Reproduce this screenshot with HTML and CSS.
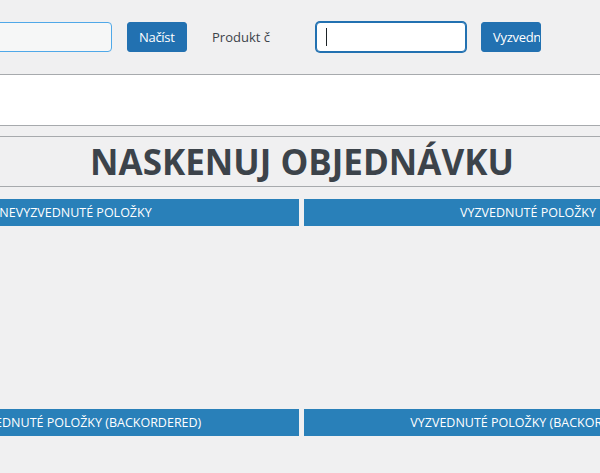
FILE: index.html
```html
<!DOCTYPE html>
<html lang="cs">

<head>
  <meta charset="UTF-8">
  <meta name="viewport" content="width=device-width, initial-scale=1.0">
  <link rel="stylesheet" href="styles.css">
  <title>Naskenuj objednávku</title>
</head>

<body>
  <div class="page">
    <div class="toolbar">
      <input type="text" class="field">
      <button type="button" class="button">Načíst</button>
      <span class="label">Produkt č</span>
      <span class="field-wrap">
        <input type="text" class="field field-focus" id="produkt">
      </span>
      <button type="button" class="button">Vyzvednout</button>
    </div>

    <div class="scan-box"></div>

    <h1 class="title">NASKENUJ OBJEDNÁVKU</h1>

    <div class="columns">
      <div class="bar">NEVYZVEDNUTÉ POLOŽKY</div>
      <div class="bar">VYZVEDNUTÉ POLOŽKY</div>
      <div class="list"></div>
      <div class="list"></div>
      <div class="bar">NEVYZVEDNUTÉ POLOŽKY (BACKORDERED)</div>
      <div class="bar">VYZVEDNUTÉ POLOŽKY (BACKORDERED)</div>
    </div>
  </div>
</body>

</html>
```

FILE: styles.css
```css
* {
  margin: 0;
  padding: 0;
  box-sizing: border-box;
}

body {
  font-family: 'Open Sans', 'Noto Sans', sans-serif;
  font-size: 13px;
  color: #3c434a;
  background: #f0f0f1;
  overflow: hidden;
}

.page {
  width: 900px;
  margin-left: -148px;
}

.toolbar {
  display: flex;
  align-items: center;
  height: 74px;
  padding: 0 0 0 110px;
}

.field {
  width: 150px;
  height: 30px;
  border: 1px solid #4fa8e8;
  border-radius: 4px;
  background: #f6f7f7;
  outline: 0;
  font-family: inherit;
  font-size: 14px;
  padding: 0 8px;
}

.field-wrap {
  position: relative;
  display: flex;
}

.field-wrap::after {
  content: "";
  position: absolute;
  left: 10px;
  top: 6px;
  width: 1px;
  height: 18px;
  background: #1d2327;
}

.field-focus {
  background: #fff;
  border-color: #2271b1;
  box-shadow: 0 0 0 1px #2271b1;
}

.button {
  width: 60px;
  height: 30px;
  margin-left: 15px;
  padding: 0 0 0 11px;
  background: #2271b1;
  border: 1px solid #2271b1;
  border-radius: 3px;
  color: #fff;
  font-family: inherit;
  font-size: 13px;
  letter-spacing: -0.3px;
  text-align: left;
  white-space: nowrap;
  overflow: hidden;
}

.label {
  margin: 0 49px 0 25px;
  width: 55px;
  white-space: nowrap;
}

.scan-box {
  height: 52px;
  background: #fff;
  border-top: 1px solid #a7aaad;
  border-bottom: 1px solid #a7aaad;
}

.title {
  margin-top: 10px;
  height: 51px;
  border-top: 1px solid #a7aaad;
  border-bottom: 1px solid #a7aaad;
  text-align: center;
  font-size: 35px;
  font-weight: 700;
  line-height: 49px;
  color: #3c434a;
}

.columns {
  display: grid;
  grid-template-columns: 447px 448px;
  grid-template-rows: 27px 183px 27px;
  column-gap: 5px;
  margin-top: 12px;
}

.bar {
  background: #2980b9;
  color: #fff;
  font-size: 12.5px;
  text-align: center;
  line-height: 27px;
  white-space: nowrap;
  overflow: hidden;
}
```
